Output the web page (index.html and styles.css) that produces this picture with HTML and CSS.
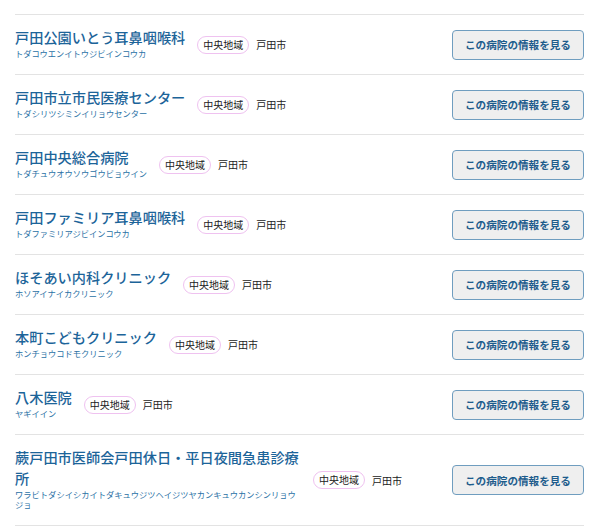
FILE: index.html
```html
<!DOCTYPE html>
<html lang="ja">
<head>
    <meta charset="UTF-8">
    <title>病院一覧</title>
    <link rel="stylesheet" href="styles.css">
</head>
<body>
    <ul class="hospital-list">
        <li class="hospital">
            <div class="hospital-name">
                <h2>戸田公園いとう耳鼻咽喉科</h2>
                <p class="kana">トダコウエンイトウジビインコウカ</p>
            </div>
            <span class="area-tag">中央地域</span>
            <span class="city">戸田市</span>
            <a class="detail-btn" href="#">この病院の情報を見る</a>
        </li>
        <li class="hospital">
            <div class="hospital-name">
                <h2>戸田市立市民医療センター</h2>
                <p class="kana">トダシリツシミンイリョウセンター</p>
            </div>
            <span class="area-tag">中央地域</span>
            <span class="city">戸田市</span>
            <a class="detail-btn" href="#">この病院の情報を見る</a>
        </li>
        <li class="hospital">
            <div class="hospital-name">
                <h2>戸田中央総合病院</h2>
                <p class="kana">トダチュウオウソウゴウビョウイン</p>
            </div>
            <span class="area-tag">中央地域</span>
            <span class="city">戸田市</span>
            <a class="detail-btn" href="#">この病院の情報を見る</a>
        </li>
        <li class="hospital">
            <div class="hospital-name">
                <h2>戸田ファミリア耳鼻咽喉科</h2>
                <p class="kana">トダファミリアジビインコウカ</p>
            </div>
            <span class="area-tag">中央地域</span>
            <span class="city">戸田市</span>
            <a class="detail-btn" href="#">この病院の情報を見る</a>
        </li>
        <li class="hospital">
            <div class="hospital-name">
                <h2>ほそあい内科クリニック</h2>
                <p class="kana">ホソアイナイカクリニック</p>
            </div>
            <span class="area-tag">中央地域</span>
            <span class="city">戸田市</span>
            <a class="detail-btn" href="#">この病院の情報を見る</a>
        </li>
        <li class="hospital">
            <div class="hospital-name">
                <h2>本町こどもクリニック</h2>
                <p class="kana">ホンチョウコドモクリニック</p>
            </div>
            <span class="area-tag">中央地域</span>
            <span class="city">戸田市</span>
            <a class="detail-btn" href="#">この病院の情報を見る</a>
        </li>
        <li class="hospital">
            <div class="hospital-name">
                <h2>八木医院</h2>
                <p class="kana">ヤギイイン</p>
            </div>
            <span class="area-tag">中央地域</span>
            <span class="city">戸田市</span>
            <a class="detail-btn" href="#">この病院の情報を見る</a>
        </li>
        <li class="hospital">
            <div class="hospital-name">
                <h2>蕨戸田市医師会戸田休日・平日夜間急患診療所</h2>
                <p class="kana">ワラビトダシイシカイトダキュウジツヘイジツヤカンキュウカンシンリョウジョ</p>
            </div>
            <span class="area-tag">中央地域</span>
            <span class="city">戸田市</span>
            <a class="detail-btn" href="#">この病院の情報を見る</a>
        </li>
    </ul>
</body>
</html>
```

FILE: styles.css
```css
* {
    margin: 0;
    padding: 0;
    box-sizing: border-box;
}

body {
    font-family: 'Noto Sans CJK JP', 'Noto Sans', sans-serif;
    color: #222;
    background: #fff;
}

.hospital-list {
    list-style: none;
    margin: 14px 16px 0 15px;
    border-top: 1px solid #e3e3e3;
}

.hospital {
    display: flex;
    align-items: center;
    padding: 14px 0;
    border-bottom: 1px solid #e3e3e3;
}

.hospital-name {
    max-width: 286px;
    margin: -2px 0 2px;
}

.hospital-name h2 {
    font-size: 14.2px;
    font-weight: 500;
    line-height: 21px;
    color: #1c6499;
}

.kana {
    font-size: 8.25px;
    line-height: 10px;
    color: #2a71a5;
}

.area-tag {
    margin-left: 12px;
    padding: 1px 5px;
    font-size: 10px;
    line-height: 14px;
    border: 1px solid #efc2f0;
    border-radius: 9px;
}

.city {
    margin-left: 7px;
    font-size: 10px;
}

.detail-btn {
    margin-left: auto;
    width: 132px;
    height: 30px;
    display: flex;
    align-items: center;
    justify-content: center;
    font-size: 10.6px;
    font-weight: bold;
    color: #1d5c8c;
    text-decoration: none;
    background: #efefef;
    border: 1px solid #6f9dbf;
    border-radius: 4px;
}
```
